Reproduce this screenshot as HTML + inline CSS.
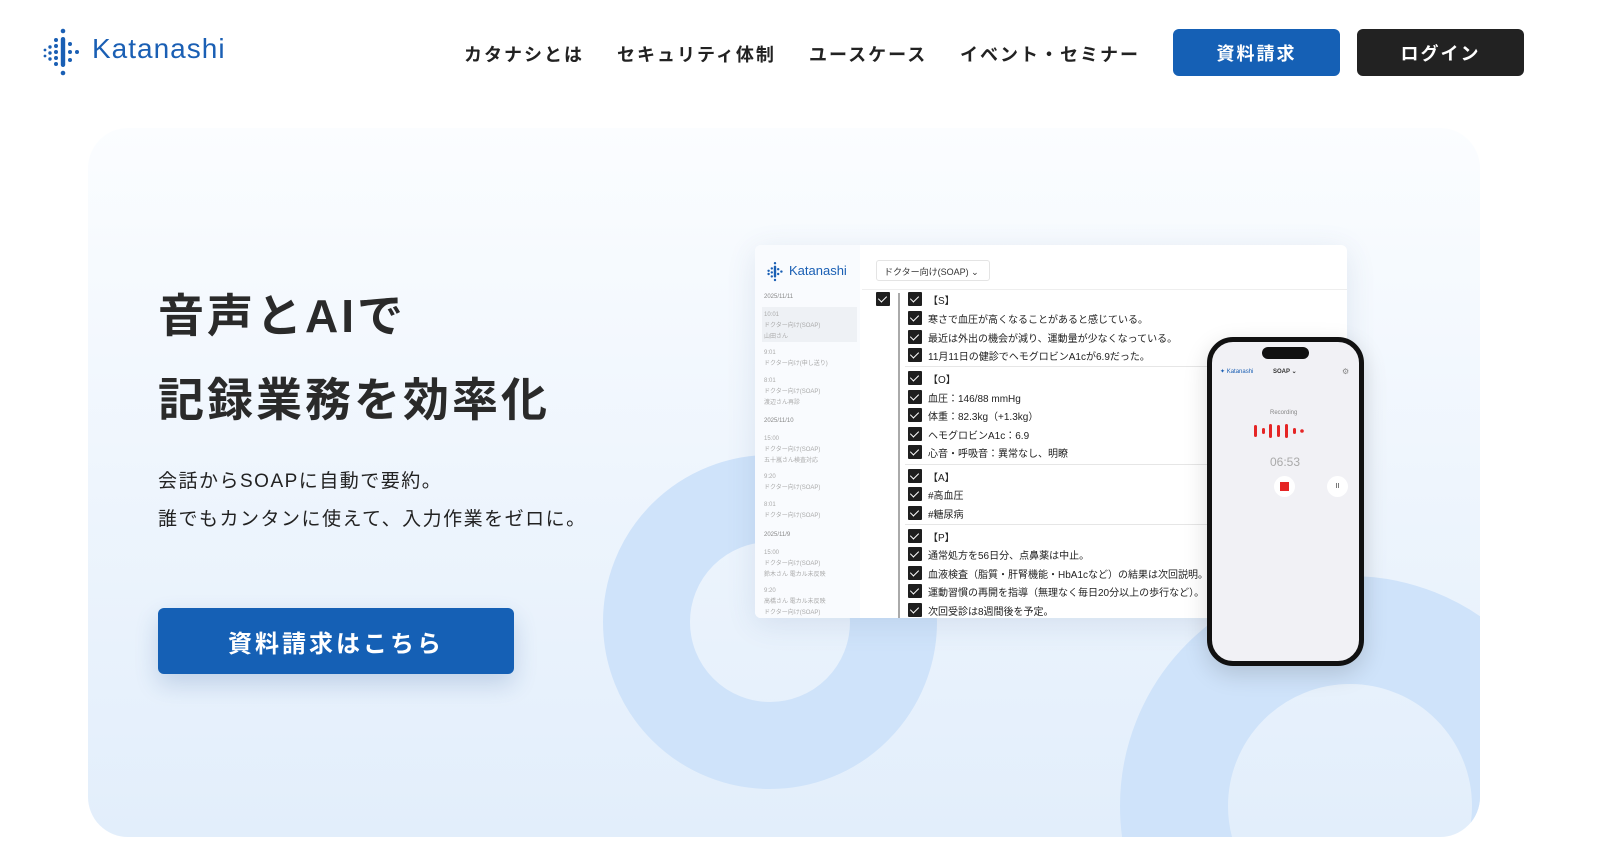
<!DOCTYPE html>
<html style="width:1600px;height:857px;overflow:hidden"><head><meta charset="utf-8"><style>
*{margin:0;padding:0;box-sizing:border-box}
html,body{width:1600px;height:857px;overflow:hidden}
body{background:#fff;font-family:"Liberation Sans","Noto Sans CJK JP",sans-serif;color:#222;position:relative}
.abs{position:absolute}
.nav a{position:absolute;top:41px;font-size:18px;font-weight:700;letter-spacing:2px;color:#222;white-space:nowrap}
.btn{position:absolute;display:flex;align-items:center;justify-content:center;color:#fff;font-weight:700;border-radius:6px}
.cb{position:absolute;left:908px;width:14px;height:14px;background:#1e1e1e;border-radius:1px}
.cb:after{content:"";position:absolute;left:4px;top:2px;width:4px;height:7px;border:solid #fff;border-width:0 1.5px 1.5px 0;transform:rotate(45deg)}
.it{position:absolute;left:928px;font-size:10px;color:#222;white-space:nowrap}
.sb{position:absolute;left:764px;font-size:6px;color:#aaa;line-height:11px;white-space:nowrap}
</style></head><body>
<svg class="abs" style="left:0;top:0" width="1600" height="857" viewBox="0 0 1600 857">
<defs>
<linearGradient id="g" x1="0" y1="0" x2="0" y2="1"><stop offset="0" stop-color="#fbfdff"/><stop offset=".5" stop-color="#eef5fd"/><stop offset="1" stop-color="#e2eefb"/></linearGradient>
<clipPath id="c"><rect x="88" y="128" width="1392" height="709" rx="40"/></clipPath>
</defs>
<rect x="88" y="128" width="1392" height="709" rx="40" fill="url(#g)"/>
<g clip-path="url(#c)" fill="none" stroke="#cfe3fa">
<circle cx="770" cy="622" r="123.5" stroke-width="87"/>
<circle cx="1350" cy="806" r="176" stroke-width="108"/>
</g>
</svg>
<svg class="abs" style="left:42px;top:28px" width="42" height="50" viewBox="0 0 42 50">
<g fill="#1a5fb4">
<circle cx="21" cy="3" r="2.3"/><circle cx="21" cy="45" r="2.3"/>
<rect x="18.8" y="9" width="4.4" height="30" rx="2.2"/>
<circle cx="14" cy="12" r="2"/><circle cx="14" cy="18" r="2"/><circle cx="14" cy="24" r="2"/><circle cx="14" cy="30" r="2"/><circle cx="14" cy="36" r="2"/>
<circle cx="8" cy="19" r="1.7"/><circle cx="8" cy="25" r="1.7"/><circle cx="8" cy="31" r="1.7"/>
<circle cx="3" cy="22" r="1.4"/><circle cx="3" cy="28" r="1.4"/>
<circle cx="28" cy="16" r="2"/><circle cx="28" cy="24" r="2"/><circle cx="28" cy="32" r="2"/>
<circle cx="35" cy="24" r="2"/>
</g></svg>
<div class="abs" style="left:92px;top:33px;font-size:28px;color:#1a5fb4;letter-spacing:1px">Katanashi</div>
<div class="nav">
<a style="left:464px">カタナシとは</a>
<a style="left:617px">セキュリティ体制</a>
<a style="left:809px">ユースケース</a>
<a style="left:960px">イベント・セミナー</a>
</div>
<div class="btn" style="left:1173px;top:29px;width:167px;height:47px;background:#1560b5;font-size:18px;letter-spacing:2px">資料請求</div>
<div class="btn" style="left:1357px;top:29px;width:167px;height:47px;background:#222;font-size:18px;letter-spacing:2px">ログイン</div>

<div class="abs" style="left:158px;top:280px;font-size:46px;font-weight:700;color:#2a2a2a;letter-spacing:3px;white-space:nowrap">音声とAIで</div>
<div class="abs" style="left:158px;top:364px;font-size:46px;font-weight:700;color:#2a2a2a;letter-spacing:3px;white-space:nowrap">記録業務を効率化</div>
<div class="abs" style="left:158px;top:463px;font-size:19px;color:#222;letter-spacing:1.5px;line-height:38px;white-space:nowrap">会話からSOAPに自動で要約。<br>誰でもカンタンに使えて、入力作業をゼロに。</div>
<div class="btn" style="left:158px;top:608px;width:356px;height:66px;background:#1560b5;font-size:24px;letter-spacing:3px;box-shadow:0 10px 24px rgba(30,80,150,.2)">資料請求はこちら</div>

<div class="abs" style="left:755px;top:245px;width:592px;height:373px;background:#fff;border-radius:6px;box-shadow:0 6px 30px rgba(60,90,140,.12)"></div>
<div class="abs" style="left:755px;top:245px;width:105px;height:373px;background:#f9fbfe;border-radius:6px 0 0 6px"></div>
<svg class="abs" style="left:766px;top:262px" width="18" height="20" viewBox="0 0 42 50"><g fill="#1a5fb4"><circle cx="21" cy="3" r="3"/><circle cx="21" cy="45" r="3"/><rect x="18" y="9" width="6" height="30" rx="3"/><circle cx="13" cy="16" r="3"/><circle cx="13" cy="26" r="3"/><circle cx="13" cy="36" r="3"/><circle cx="5" cy="22" r="3"/><circle cx="5" cy="30" r="3"/><circle cx="29" cy="18" r="3"/><circle cx="29" cy="30" r="3"/><circle cx="37" cy="24" r="3"/></g></svg>
<div class="abs" style="left:789px;top:263px;font-size:13px;color:#1a5fb4">Katanashi</div>
<div class="abs" style="left:876px;top:260px;width:114px;height:21px;border:1px solid #e4e4e4;border-radius:3px;font-size:9px;color:#333;padding:4px 7px;white-space:nowrap">ドクター向け(SOAP) ⌄</div>
<div class="abs" style="left:862px;top:289px;width:485px;height:1px;background:#eee"></div>
<div class="abs" style="left:762px;top:307px;width:95px;height:35px;background:#eef1f5"></div>
<div class="sb" style="top:292px;color:#888">2025/11/11</div>
<div class="sb" style="top:310px">10:01<br>ドクター向け(SOAP)<br>山田さん</div>
<div class="sb" style="top:348px">9:01<br>ドクター向け(申し送り)</div>
<div class="sb" style="top:376px">8:01<br>ドクター向け(SOAP)<br>渡辺さん再診</div>
<div class="sb" style="top:416px;color:#888">2025/11/10</div>
<div class="sb" style="top:434px">15:00<br>ドクター向け(SOAP)<br>五十嵐さん検査対応</div>
<div class="sb" style="top:472px">9:20<br>ドクター向け(SOAP)</div>
<div class="sb" style="top:500px">8:01<br>ドクター向け(SOAP)</div>
<div class="sb" style="top:530px;color:#888">2025/11/9</div>
<div class="sb" style="top:548px">15:00<br>ドクター向け(SOAP)<br>鈴木さん 電カル未反映</div>
<div class="sb" style="top:586px">9:20<br>高橋さん 電カル未反映<br>ドクター向け(SOAP)</div>
<div class="cb" style="left:876px;top:292px"></div>
<div class="abs" style="left:898px;top:293px;width:2px;height:325px;background:#aaa"></div>
<div class="abs" style="left:905px;top:366px;width:442px;height:1px;background:#e6e6e6"></div>
<div class="abs" style="left:905px;top:464px;width:442px;height:1px;background:#e6e6e6"></div>
<div class="abs" style="left:905px;top:524px;width:442px;height:1px;background:#e6e6e6"></div>
<div class="cb" style="top:292px"></div><div class="it" style="top:292px">【S】</div>
<div class="cb" style="top:311px"></div><div class="it" style="top:311px">寒さで血圧が高くなることがあると感じている。</div>
<div class="cb" style="top:330px"></div><div class="it" style="top:330px">最近は外出の機会が減り、運動量が少なくなっている。</div>
<div class="cb" style="top:348px"></div><div class="it" style="top:348px">11月11日の健診でヘモグロビンA1cが6.9だった。</div>
<div class="cb" style="top:371px"></div><div class="it" style="top:371px">【O】</div>
<div class="cb" style="top:390px"></div><div class="it" style="top:390px">血圧：146/88 mmHg</div>
<div class="cb" style="top:408px"></div><div class="it" style="top:408px">体重：82.3kg（+1.3kg）</div>
<div class="cb" style="top:427px"></div><div class="it" style="top:427px">ヘモグロビンA1c：6.9</div>
<div class="cb" style="top:445px"></div><div class="it" style="top:445px">心音・呼吸音：異常なし、明瞭</div>
<div class="cb" style="top:469px"></div><div class="it" style="top:469px">【A】</div>
<div class="cb" style="top:487px"></div><div class="it" style="top:487px">#高血圧</div>
<div class="cb" style="top:506px"></div><div class="it" style="top:506px">#糖尿病</div>
<div class="cb" style="top:529px"></div><div class="it" style="top:529px">【P】</div>
<div class="cb" style="top:547px"></div><div class="it" style="top:547px">通常処方を56日分、点鼻薬は中止。</div>
<div class="cb" style="top:566px"></div><div class="it" style="top:566px">血液検査（脂質・肝腎機能・HbA1cなど）の結果は次回説明。</div>
<div class="cb" style="top:584px"></div><div class="it" style="top:584px">運動習慣の再開を指導（無理なく毎日20分以上の歩行など）。</div>
<div class="cb" style="top:603px"></div><div class="it" style="top:603px">次回受診は8週間後を予定。</div>

<div class="abs" style="left:1207px;top:337px;width:157px;height:329px;border:5px solid #111;border-radius:26px;background:#f1f1f5;box-shadow:0 8px 24px rgba(0,0,0,.15)"></div>
<div class="abs" style="left:1262px;top:347px;width:47px;height:12px;background:#111;border-radius:6px"></div>
<div class="abs" style="left:1220px;top:368px;font-size:6px;color:#1a5fb4;white-space:nowrap">✦ Katanashi</div>
<div class="abs" style="left:1273px;top:368px;font-size:6px;color:#333;font-weight:700;white-space:nowrap">SOAP ⌄</div>
<div class="abs" style="left:1342px;top:367px;font-size:8px;color:#888">⚙</div>
<div class="abs" style="left:1270px;top:410px;font-size:6px;color:#888">Recording</div>
<svg class="abs" style="left:1254px;top:423px" width="64" height="16"><g fill="#e52525"><rect x="0" y="2" width="3" height="12" rx="1.5"/><rect x="8" y="5" width="3" height="6" rx="1.5"/><rect x="15" y="1" width="3" height="14" rx="1.5"/><rect x="23" y="2" width="3" height="12" rx="1.5"/><rect x="31" y="1" width="3" height="14" rx="1.5"/><rect x="39" y="5" width="3" height="6" rx="1.5"/><circle cx="48" cy="8" r="1.8"/></g></svg>
<div class="abs" style="left:1270px;top:455px;font-size:12px;color:#aaa">06:53</div>
<div class="abs" style="left:1274px;top:476px;width:21px;height:21px;border-radius:50%;background:#fff"><div style="margin:6px;width:9px;height:9px;background:#e52525"></div></div>
<div class="abs" style="left:1327px;top:476px;width:21px;height:21px;border-radius:50%;background:#fff;font-size:7px;text-align:center;line-height:21px;color:#333">II</div>
</body></html>
